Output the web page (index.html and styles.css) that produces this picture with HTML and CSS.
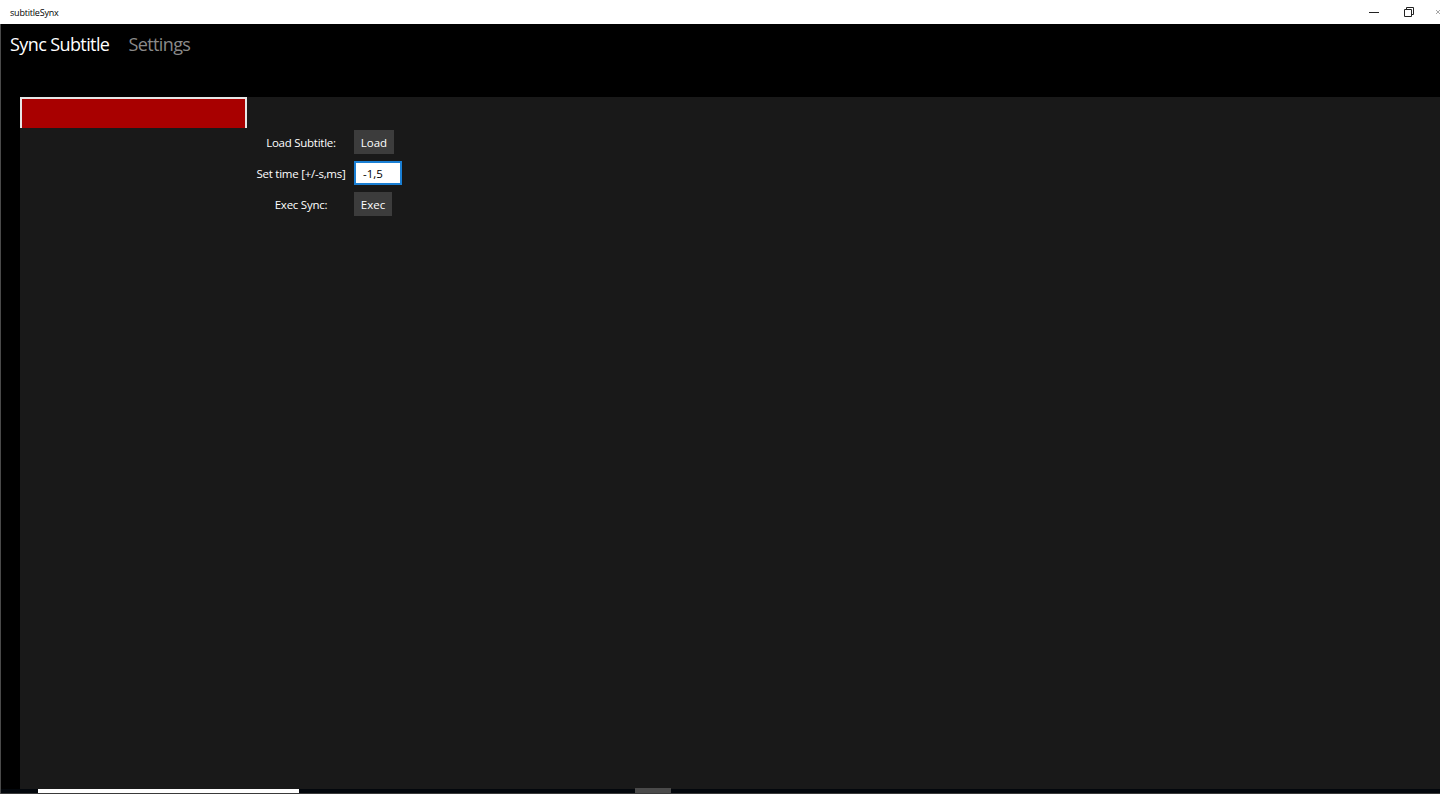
FILE: index.html
```html
<!DOCTYPE html>
<html lang="en">
<head>
<meta charset="utf-8">
<title>subtitleSynx</title>
<link rel="stylesheet" href="styles.css">
</head>
<body>
<div class="titlebar">
  <span class="app-title">subtitleSynx</span>
  <div class="controls">
    <span class="ctl ctl-min"><svg width="10" height="10" viewBox="0 0 10 10"><path d="M0 5.5h10" stroke="#222" stroke-width="1"/></svg></span>
    <span class="ctl ctl-max"><svg width="10" height="10" viewBox="0 0 10 10"><path d="M0.5 2.5h7v7h-7z M2.5 2.5v-2h7v7h-2" fill="none" stroke="#222" stroke-width="1"/></svg></span>
    <span class="ctl ctl-close"><svg width="10" height="10" viewBox="0 0 10 10"><path d="M0 0l10 10M10 0l-10 10" stroke="#222" stroke-width="1"/></svg></span>
  </div>
</div>
<div class="window">
  <div class="pivot">
    <span class="pivot-item active">Sync Subtitle</span>
    <span class="pivot-item">Settings</span>
  </div>
  <div class="content">
    <div class="panel">
      <div class="red-tab"></div>
      <div class="form">
        <span class="label">Load Subtitle:</span>
        <span class="btn btn-load">Load</span>
        <span class="label">Set time [+/-s,ms]</span>
        <span class="textbox">-1,5</span>
        <span class="label">Exec Sync:</span>
        <span class="btn btn-exec">Exec</span>
      </div>
    </div>
  </div>
  <div class="scrollstrip">
    <div class="scroll-white"></div>
    <div class="scroll-thumb"></div>
  </div>
</div>
</body>
</html>
```

FILE: styles.css
```css
html, body {
  margin: 0;
  padding: 0;
  width: 1440px;
  height: 794px;
  overflow: hidden;
  background: #000;
  font-family: "Open Sans", "Noto Sans", "Liberation Sans", sans-serif;
}

.titlebar {
  height: 24px;
  background: #fff;
  display: flex;
  align-items: center;
  justify-content: space-between;
}

.app-title {
  font-size: 9px;
  color: #000;
  padding-left: 10px;
  letter-spacing: -0.2px;
}

.controls {
  display: flex;
  align-items: center;
  height: 24px;
}

.ctl {
  display: flex;
  align-items: center;
  justify-content: center;
  width: 34px;
  height: 24px;
}

.ctl-min { margin-right: 1px; }
.ctl-close { justify-content: flex-start; padding-left: 10px; width: 4px; overflow: hidden; }

.window {
  height: 770px;
  border-left: 1px solid #4a4a4a;
  display: flex;
  flex-direction: column;
  background: #000;
}

.pivot {
  height: 73px;
  display: flex;
  align-items: flex-start;
  gap: 19px;
  padding-left: 9px;
  box-sizing: border-box;
  padding-top: 7px;
}

.pivot-item {
  font-size: 18px;
  color: #8a8a8a;
  letter-spacing: -0.6px;
  line-height: 26px;
}

.pivot-item.active {
  color: #fff;
}

.content {
  flex: 1;
  display: flex;
  padding-left: 19px;
}

.panel {
  flex: 1;
  background: #191919;
}

.red-tab {
  width: 227px;
  height: 31px;
  box-sizing: border-box;
  background: #a80000;
  border: 2px solid #e6e6e6;
  border-bottom: none;
}

.form {
  margin-left: 236px;
  margin-top: 2px;
  display: grid;
  grid-template-columns: 90px auto;
  grid-auto-rows: 24px;
  column-gap: 8px;
  row-gap: 7px;
  align-items: center;
  justify-items: start;
}

.label {
  justify-self: center;
  font-size: 11.5px;
  color: #fff;
  white-space: nowrap;
  letter-spacing: -0.25px;
}

.btn {
  height: 24px;
  background: #3c3c3c;
  color: #fff;
  font-size: 11.5px;
  display: flex;
  align-items: center;
  justify-content: center;
  box-sizing: border-box;
}

.btn-load { width: 40px; }
.btn-exec { width: 38px; }

.textbox {
  width: 48px;
  height: 24px;
  box-sizing: border-box;
  background: #fff;
  border: 2px solid #1a7fd4;
  color: #000;
  font-size: 11.5px;
  display: flex;
  align-items: center;
  padding-left: 7px;
}

.scrollstrip {
  height: 5px;
  background: #03070c;
  border-bottom: 1px solid #3a3a3a;
  box-sizing: border-box;
  display: flex;
  align-items: flex-end;
}

.scroll-white {
  margin-left: 37px;
  width: 261px;
  height: 4px;
  background: #fff;
}

.scroll-thumb {
  margin-left: 336px;
  width: 36px;
  height: 5px;
  background: #4a4a4a;
}
```
